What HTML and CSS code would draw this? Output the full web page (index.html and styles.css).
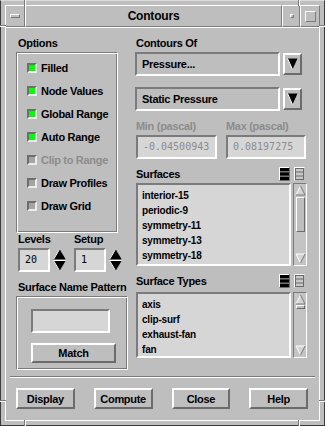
FILE: index.html
```html
<!DOCTYPE html>
<html>
<head>
<meta charset="utf-8">
<title>Contours</title>
<link rel="stylesheet" href="styles.css">
</head>
<body>
<div class="window">
  <span class="notch nv n-tl"></span>
  <span class="notch nv n-tr"></span>
  <span class="notch nv n-bl"></span>
  <span class="notch nv n-br"></span>
  <span class="notch nh n-lt"></span>
  <span class="notch nh n-rt"></span>
  <span class="notch nh n-lb"></span>
  <span class="notch nh n-rb"></span>

  <div class="titlebar">
    <div class="tb-cell tb-menu"><span class="menu-bar"></span></div>
    <div class="tb-cell tb-title">Contours</div>
    <div class="tb-cell tb-min"><span class="min-sq"></span></div>
    <div class="tb-cell tb-max"><span class="max-sq"></span></div>
  </div>

  <div class="client">
    <div class="main">
      <div class="col-left">
        <div class="label ind2">Options</div>
        <div class="etched options">
          <div class="check on"><span class="box"></span>Filled</div>
          <div class="check on"><span class="box"></span>Node Values</div>
          <div class="check on"><span class="box"></span>Global Range</div>
          <div class="check on"><span class="box"></span>Auto Range</div>
          <div class="check disabled"><span class="box"></span>Clip to Range</div>
          <div class="check"><span class="box"></span>Draw Profiles</div>
          <div class="check"><span class="box"></span>Draw Grid</div>
        </div>

        <div class="spin-grid spin-labels">
          <span>Levels</span>
          <span>Setup</span>
        </div>
        <div class="spin-grid spin-row">
          <div class="spinner">
            <div class="field spin-field">20</div>
            <svg class="spin-arrows" width="13" height="24" viewBox="0 0 13 24">
              <polygon points="6.5,1 12.5,11 0.5,11" fill="#000"/>
              <line x1="0.8" y1="11" x2="6.5" y2="1.3" stroke="#fff" stroke-width="1"/>
              <line x1="0.5" y1="11.5" x2="12.5" y2="11.5" stroke="#6b6b6b" stroke-width="1"/>
              <polygon points="0.5,13 12.5,13 6.5,23" fill="#000"/>
              <line x1="0.5" y1="12.5" x2="12.5" y2="12.5" stroke="#fff" stroke-width="1"/>
              <line x1="0.8" y1="13" x2="6.5" y2="22.7" stroke="#fff" stroke-width="1"/>
            </svg>
          </div>
          <div class="spinner">
            <div class="field spin-field">1</div>
            <svg class="spin-arrows" width="13" height="24" viewBox="0 0 13 24">
              <polygon points="6.5,1 12.5,11 0.5,11" fill="#000"/>
              <line x1="0.8" y1="11" x2="6.5" y2="1.3" stroke="#fff" stroke-width="1"/>
              <line x1="0.5" y1="11.5" x2="12.5" y2="11.5" stroke="#6b6b6b" stroke-width="1"/>
              <polygon points="0.5,13 12.5,13 6.5,23" fill="#000"/>
              <line x1="0.5" y1="12.5" x2="12.5" y2="12.5" stroke="#fff" stroke-width="1"/>
              <line x1="0.8" y1="13" x2="6.5" y2="22.7" stroke="#fff" stroke-width="1"/>
            </svg>
          </div>
        </div>

        <div class="label ind2 snp-label">Surface Name Pattern</div>
        <div class="etched pattern">
          <div class="field pattern-field"></div>
          <div class="button match">Match</div>
        </div>
      </div>

      <div class="col-right">
        <div class="label ind1">Contours Of</div>
        <div class="dropdown-row">
          <div class="dropdown">Pressure...</div>
          <div class="button drop-btn">
            <svg width="11" height="12" viewBox="0 0 11 12">
              <polygon points="0.5,0.5 10.5,0.5 5.5,11.5" fill="#000"/>
              <line x1="0.5" y1="0.5" x2="5.5" y2="11.5" stroke="#fff" stroke-width="1"/>
            </svg>
          </div>
        </div>
        <div class="dropdown-row second">
          <div class="dropdown">Static Pressure</div>
          <div class="button drop-btn">
            <svg width="11" height="12" viewBox="0 0 11 12">
              <polygon points="0.5,0.5 10.5,0.5 5.5,11.5" fill="#000"/>
              <line x1="0.5" y1="0.5" x2="5.5" y2="11.5" stroke="#fff" stroke-width="1"/>
            </svg>
          </div>
        </div>

        <div class="range-grid range-labels">
          <span>Min (pascal)</span>
          <span>Max (pascal)</span>
        </div>
        <div class="range-grid range-row">
          <div class="field range-field">-0.04500943</div>
          <div class="field range-field">0.08197275</div>
        </div>

        <div class="list-head">
          <span>Surfaces</span>
          <div class="icons">
            <svg width="11" height="14" viewBox="0 0 11 14">
              <rect x="0" y="0" width="11" height="14" fill="#bebebe"/>
              <rect x="1" y="1" width="9" height="3.4" fill="#000"/>
              <rect x="1" y="5.3" width="9" height="3.4" fill="#000"/>
              <rect x="1" y="9.6" width="9" height="3.4" fill="#000"/>
              <path d="M0.5 13.5 V0.5 H10.5" fill="none" stroke="#fff"/>
              <path d="M10.5 0.5 V13.5 H0.5" fill="none" stroke="#6b6b6b"/>
            </svg>
            <svg width="11" height="14" viewBox="0 0 11 14">
              <rect x="0" y="0" width="11" height="14" fill="#bebebe"/>
              <rect x="1.5" y="1.5" width="8" height="11" fill="#c8c8c8" stroke="#6b6b6b"/>
              <line x1="1.5" y1="5" x2="9.5" y2="5" stroke="#6b6b6b"/>
              <line x1="1.5" y1="9" x2="9.5" y2="9" stroke="#6b6b6b"/>
              <path d="M0.5 13.5 V0.5 H10.5" fill="none" stroke="#fff"/>
            </svg>
          </div>
        </div>
        <div class="list-row list-one">
          <div class="list">
            <div class="item">interior-15</div>
            <div class="item">periodic-9</div>
            <div class="item">symmetry-11</div>
            <div class="item">symmetry-13</div>
            <div class="item">symmetry-18</div>
          </div>
          <div class="scrollbar">
            <svg class="sb-arrow" width="11" height="11" viewBox="0 0 11 11">
              <polygon points="5.5,1 10,10 1,10" fill="#d4d4d4"/>
              <line x1="1" y1="10" x2="5.5" y2="1" stroke="#fff"/>
              <path d="M5.5 1 L10 10 H1" fill="none" stroke="#7b7b7b"/>
            </svg>
            <div class="slider big"></div>
            <div class="sb-fill"></div>
            <svg class="sb-arrow" width="11" height="11" viewBox="0 0 11 11">
              <polygon points="1,1 10,1 5.5,10" fill="#d4d4d4"/>
              <path d="M1 1 H10 M1 1 L5.5 10" fill="none" stroke="#fff"/>
              <line x1="10" y1="1" x2="5.5" y2="10" stroke="#7b7b7b"/>
            </svg>
          </div>
        </div>

        <div class="list-head">
          <span>Surface Types</span>
          <div class="icons">
            <svg width="11" height="14" viewBox="0 0 11 14">
              <rect x="0" y="0" width="11" height="14" fill="#bebebe"/>
              <rect x="1" y="1" width="9" height="3.4" fill="#000"/>
              <rect x="1" y="5.3" width="9" height="3.4" fill="#000"/>
              <rect x="1" y="9.6" width="9" height="3.4" fill="#000"/>
              <path d="M0.5 13.5 V0.5 H10.5" fill="none" stroke="#fff"/>
              <path d="M10.5 0.5 V13.5 H0.5" fill="none" stroke="#6b6b6b"/>
            </svg>
            <svg width="11" height="14" viewBox="0 0 11 14">
              <rect x="0" y="0" width="11" height="14" fill="#bebebe"/>
              <rect x="1.5" y="1.5" width="8" height="11" fill="#c8c8c8" stroke="#6b6b6b"/>
              <line x1="1.5" y1="5" x2="9.5" y2="5" stroke="#6b6b6b"/>
              <line x1="1.5" y1="9" x2="9.5" y2="9" stroke="#6b6b6b"/>
              <path d="M0.5 13.5 V0.5 H10.5" fill="none" stroke="#fff"/>
            </svg>
          </div>
        </div>
        <div class="list-row list-two">
          <div class="list">
            <div class="item">axis</div>
            <div class="item">clip-surf</div>
            <div class="item">exhaust-fan</div>
            <div class="item">fan</div>
          </div>
          <div class="scrollbar">
            <svg class="sb-arrow" width="11" height="11" viewBox="0 0 11 11">
              <polygon points="5.5,1 10,10 1,10" fill="#d4d4d4"/>
              <line x1="1" y1="10" x2="5.5" y2="1" stroke="#fff"/>
              <path d="M5.5 1 L10 10 H1" fill="none" stroke="#7b7b7b"/>
            </svg>
            <div class="slider small"></div>
            <div class="sb-fill"></div>
            <svg class="sb-arrow" width="11" height="11" viewBox="0 0 11 11">
              <polygon points="1,1 10,1 5.5,10" fill="#d4d4d4"/>
              <path d="M1 1 H10 M1 1 L5.5 10" fill="none" stroke="#fff"/>
              <line x1="10" y1="1" x2="5.5" y2="10" stroke="#7b7b7b"/>
            </svg>
          </div>
        </div>
      </div>
    </div>

    <div class="separator"></div>

    <div class="actions">
      <div class="button action">Display</div>
      <div class="button action">Compute</div>
      <div class="button action">Close</div>
      <div class="button action">Help</div>
    </div>
  </div>
</div>
</body>
</html>
```
FILE: styles.css
```css
* {
  box-sizing: border-box;
  margin: 0;
  padding: 0;
}

html, body {
  width: 325px;
  height: 426px;
  overflow: hidden;
}

body {
  background: #bebebe;
  font-family: "Liberation Sans", Arial, sans-serif;
  font-weight: bold;
  font-size: 11px;
  letter-spacing: -0.3px;
  line-height: 14px;
  color: #000;
}

/* ---------- window frame ---------- */
.window {
  position: relative;
  width: 325px;
  height: 426px;
  background: #bebebe;
  border: 1px solid #3a3a3a;
  border-top-color: #dcdcdc;
  padding: 4px;
  display: flex;
  flex-direction: column;
}

.notch {
  position: absolute;
  border-style: solid;
  border-width: 0;
}
.nv {
  width: 2px;
  border-left: 1px solid #7b7b7b;
  border-right: 1px solid #fff;
}
.nh {
  height: 2px;
  border-top: 1px solid #7b7b7b;
  border-bottom: 1px solid #fff;
}
.n-tl { left: 23px; top: -1px; height: 6px; }
.n-tr { left: 297px; top: -1px; height: 6px; }
.n-bl { left: 23px; bottom: -1px; height: 6px; }
.n-br { left: 297px; bottom: -1px; height: 6px; }
.n-lt { left: -1px; top: 24px; width: 6px; }
.n-rt { right: -1px; top: 24px; width: 6px; }
.n-lb { left: -1px; bottom: 23px; width: 6px; }
.n-rb { right: -1px; bottom: 23px; width: 6px; }

.titlebar {
  display: flex;
  height: 22px;
  flex: none;
}
.tb-cell {
  border: 1px solid;
  border-color: #fff #7b7b7b #7b7b7b #fff;
  display: flex;
  align-items: center;
  justify-content: center;
}
.tb-menu { width: 20px; }
.tb-title {
  flex: 1;
  font-size: 12px;
  letter-spacing: -0.2px;
}
.tb-min { width: 18px; }
.tb-max { width: 20px; }

.menu-bar,
.min-sq,
.max-sq {
  display: block;
  border: 1px solid;
  border-color: #fff #7b7b7b #7b7b7b #fff;
}
.menu-bar { width: 10px; height: 4px; margin-top: -1px; }
.min-sq { width: 4px; height: 4px; margin-left: 2px; }
.max-sq { width: 11px; height: 11px; }

/* ---------- client ---------- */
.client {
  flex: 1;
  border: 1px solid #fff;
  padding: 8px 11px 0 10px;
  display: flex;
  flex-direction: column;
}

.main {
  display: flex;
  gap: 6px;
}

.col-left {
  width: 113px;
  display: flex;
  flex-direction: column;
}

.col-right {
  width: 172px;
  display: flex;
  flex-direction: column;
}

.label {
  height: 14px;
  line-height: 14px;
  white-space: nowrap;
}
.ind1 { padding-left: 1px; }
.ind2 { padding-left: 2px; }

/* shared bevels */
.etched {
  border: 1px solid;
  border-color: #7b7b7b #fff #fff #7b7b7b;
  box-shadow: inset 1px 1px 0 #fff, inset -1px -1px 0 #7b7b7b;
}

.field {
  background: #d6d6d6;
  border: 2px solid;
  border-color: #7b7b7b #fff #fff #7b7b7b;
}

.button {
  background: #bebebe;
  border: 2px solid;
  border-color: #fff #6b6b6b #6b6b6b #fff;
  display: flex;
  align-items: center;
  justify-content: center;
  white-space: nowrap;
}

/* options */
.options {
  margin-top: 2px;
  width: 102px;
  height: 181px;
  padding: 3px 0 0 10px;
}

.check {
  height: 23px;
  display: flex;
  align-items: center;
  gap: 4px;
  white-space: nowrap;
}
.box {
  width: 10px;
  height: 10px;
  border: 2px solid;
  border-color: #6e6e6e #ececec #ececec #6e6e6e;
  background: #a4a4a4;
  flex: none;
}
.check.on .box { background: #00ff00; }
.check.disabled { color: #8c8c8c; }

/* spinners */
.spin-grid {
  display: grid;
  grid-template-columns: 56px 56px;
  padding-left: 2px;
}
.spin-labels {
  margin-top: -1px;
  height: 14px;
}
.spin-row {
  margin-top: 2px;
  height: 24px;
}
.spinner {
  display: flex;
  align-items: center;
  gap: 3px;
}
.spin-field {
  width: 32px;
  height: 24px;
  font-family: "DejaVu Sans Mono", "Liberation Mono", monospace;
  font-weight: normal;
  font-size: 10px;
  letter-spacing: 0;
  line-height: 20px;
  padding-left: 5px;
}
.spin-arrows { display: block; }

/* surface name pattern */
.snp-label { margin-top: 8px; }
.pattern {
  margin-top: 2px;
  width: 112px;
  height: 74px;
  padding: 12px 0 0 14px;
  display: flex;
  flex-direction: column;
  gap: 10px;
}
.pattern-field {
  width: 79px;
  height: 24px;
}
.match {
  width: 85px;
  height: 20px;
}

/* dropdowns */
.dropdown-row {
  margin-top: 2px;
  height: 24px;
  display: flex;
  align-items: center;
  gap: 3px;
}
.dropdown-row.second { margin-top: 11px; }
.dropdown {
  width: 145px;
  height: 24px;
  border: 2px solid;
  border-color: #7b7b7b #fff #fff #7b7b7b;
  padding-left: 5px;
  display: flex;
  align-items: center;
  white-space: nowrap;
}
.drop-btn {
  width: 19px;
  height: 22px;
}
.drop-btn svg { display: block; }

/* min / max */
.range-grid {
  display: grid;
  grid-template-columns: 81px 80px;
  column-gap: 9px;
  padding-left: 1px;
}
.range-labels {
  margin-top: 8px;
  height: 14px;
  color: #8c8c8c;
  white-space: nowrap;
}
.range-row {
  margin-top: 2px;
  height: 24px;
}
.range-field {
  height: 24px;
  font-family: "DejaVu Sans Mono", "Liberation Mono", monospace;
  font-weight: normal;
  font-size: 10px;
  letter-spacing: 0;
  line-height: 20px;
  padding-left: 5px;
  color: #8c8c8c;
  white-space: nowrap;
  overflow: hidden;
}

/* lists */
.list-head {
  margin-top: 8px;
  height: 14px;
  display: flex;
  align-items: center;
  padding-left: 1px;
  padding-right: 2px;
}
.icons {
  margin-left: auto;
  display: flex;
  gap: 4px;
}
.icons svg { display: block; }

.list-row {
  display: flex;
  gap: 2px;
  padding-left: 1px;
}
.list-one { margin-top: 2px; height: 83px; }
.list-two { margin-top: 4px; height: 66px; }

.list {
  width: 155px;
  background: #d6d6d6;
  border: 2px solid;
  border-color: #7b7b7b #fff #fff #7b7b7b;
  padding: 3px 0 0 4px;
  font-size: 10px;
  letter-spacing: -0.2px;
  overflow: hidden;
}
.item {
  height: 15px;
  line-height: 15px;
  white-space: nowrap;
}

.scrollbar {
  width: 14px;
  background: #c4c4c4;
  border: 1px solid;
  border-color: #7b7b7b #fff #fff #7b7b7b;
  padding: 1px 0 1px 0;
  display: flex;
  flex-direction: column;
  align-items: center;
}
.sb-arrow { display: block; flex: none; }
.slider {
  width: 9px;
  background: #bebebe;
  border: 1px solid;
  border-color: #fff #6b6b6b #6b6b6b #fff;
  flex: none;
}
.slider.big { height: 35px; margin-top: 1px; }
.slider.small { height: 4px; }
.sb-fill { flex: 1; }

/* bottom */
.separator {
  height: 2px;
  border-top: 1px solid #7b7b7b;
  border-bottom: 1px solid #fff;
  margin: 6px -7px 0 -6px;
}

.actions {
  margin-top: 10px;
  display: flex;
  gap: 19px;
}
.action {
  width: 59px;
  height: 21px;
}
```
